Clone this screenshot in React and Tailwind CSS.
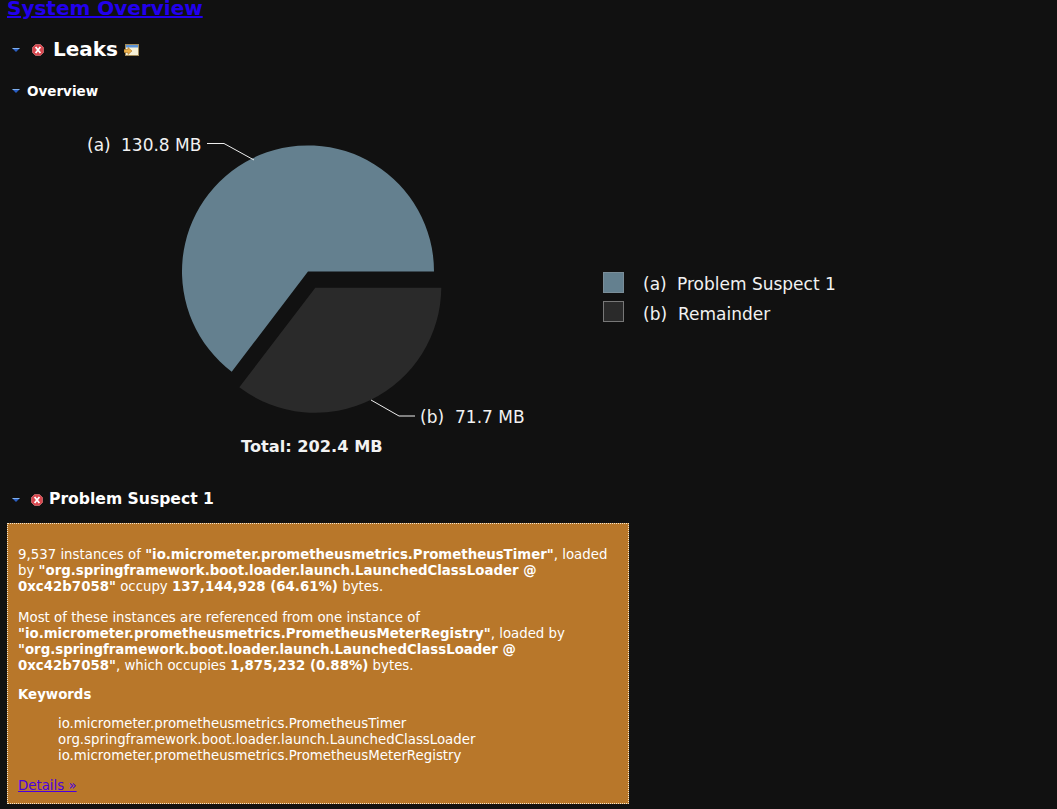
const font = { fontFamily: '"DejaVu Sans", Verdana, sans-serif' }

function Twisty() {
    return (
        <svg width="8" height="6" viewBox="0 0 8 6" className="shrink-0">
            <path d="M0.5 1.5H7.5L4 5Z" fill="#2a5fc4" />
            <path d="M0.5 1.5H7.5" stroke="#7fb0f0" strokeWidth="1" />
        </svg>
    )
}

function ErrorIcon() {
    return (
        <svg width="12" height="12" viewBox="0 0 12 12" className="shrink-0 block">
            <path d="M3.5 0.5H8.5L11.5 3.5V8.5L8.5 11.5H3.5L0.5 8.5V3.5Z" fill="#d9474f" stroke="#e58a8a" strokeWidth="0.6" />
            <path d="M3.6 3L8.4 9M8.4 3L3.6 9" stroke="#fff" strokeWidth="1.8" />
        </svg>
    )
}

function WindowIcon() {
    return (
        <svg width="15" height="13" viewBox="0 0 15 13" className="shrink-0 block">
            <rect x="1.5" y="0.5" width="13" height="11" fill="#f6f1d8" stroke="#a08a5a" />
            <rect x="2" y="1" width="12" height="2.5" fill="#5b93d8" />
            <path d="M0 5.5H4V3.5L8 7L4 10.5V8.5H0Z" fill="#eeb24a" stroke="#a8742a" strokeWidth="0.6" />
        </svg>
    )
}

function PieChart() {
    return (
        <svg width="1057" height="364" viewBox="0 101 1057 364" className="block" fontFamily='"DejaVu Sans", Verdana, sans-serif' fontSize="17" fill="#f2f2f2">
            <path d="M308 271.5L231.7 371.7A126 126 0 1 1 434 271.5Z" fill="#64808f" />
            <path d="M315.3 287.7H441.3A126 126 0 0 1 239.3 387.3Z" fill="#2a2a2a" />
            <path d="M207 143.5H224L254 160" fill="none" stroke="#eeeeee" strokeWidth="1" />
            <path d="M371 400L399 416H415" fill="none" stroke="#eeeeee" strokeWidth="1" />
            <text x="87" y="151">(a)</text>
            <text x="121" y="151">130.8 MB</text>
            <text x="420" y="423">(b)</text>
            <text x="455" y="423">71.7 MB</text>
            <text x="241" y="452" fontWeight="700" fontSize="16.2">Total: 202.4 MB</text>
            <rect x="603.5" y="272.5" width="20" height="20" fill="#64808f" stroke="#7a8d98" />
            <rect x="603.5" y="301.5" width="20" height="20" fill="#2a2a2a" stroke="#777777" />
            <text x="643" y="290">(a)</text>
            <text x="677" y="290">Problem Suspect 1</text>
            <text x="643" y="320">(b)</text>
            <text x="678" y="320">Remainder</text>
        </svg>
    )
}

export default function App() {
    return (
        <div className="w-[1057px] h-[809px] overflow-hidden bg-[#111111] text-white" style={font}>
            <a href="#" className="block pl-[7px] text-[20px] leading-[16px] font-bold text-[#2200ee] underline">System Overview</a>

            <div className="flex items-center h-[28px] mt-[20px] pl-[12px]">
                <Twisty />
                <span className="ml-[12px]"><ErrorIcon /></span>
                <h1 className="ml-[9px] pb-[2px] text-[20px] font-bold leading-[26px]">Leaks</h1>
                <span className="ml-[6px]"><WindowIcon /></span>
            </div>

            <div className="flex items-center h-[20px] mt-[17px] pl-[12px]">
                <Twisty />
                <h2 className="ml-[7px] text-[13.5px] font-bold">Overview</h2>
            </div>

            <PieChart />

            <div className="flex items-center h-[20px] mt-[25px] pl-[12px]">
                <Twisty />
                <span className="ml-[11px]"><ErrorIcon /></span>
                <h2 className="ml-[6px] text-[15.6px] font-bold">Problem Suspect 1</h2>
            </div>

            <div className="w-[622px] h-[281px] ml-[7px] mt-[13px] px-[10px] pt-[23px] bg-[#b8772a] border border-dotted border-[#f5e6cc] text-[13.33px] leading-[16px] text-white">
                <p>9,537 instances of <b>"io.micrometer.prometheusmetrics.PrometheusTimer"</b>, loaded by <b>"org.springframework.boot.loader.launch.LaunchedClassLoader @ 0xc42b7058"</b> occupy <b>137,144,928 (64.61%)</b> bytes.</p>
                <p className="mt-[15px]">Most of these instances are referenced from one instance of <b>"io.micrometer.prometheusmetrics.PrometheusMeterRegistry"</b>, loaded by <b>"org.springframework.boot.loader.launch.LaunchedClassLoader @ 0xc42b7058"</b>, which occupies <b>1,875,232 (0.88%)</b> bytes.</p>
                <p className="mt-[13px] font-bold">Keywords</p>
                <ul className="mt-[13px] pl-[40px]">
                    <li>io.micrometer.prometheusmetrics.PrometheusTimer</li>
                    <li>org.springframework.boot.loader.launch.LaunchedClassLoader</li>
                    <li>io.micrometer.prometheusmetrics.PrometheusMeterRegistry</li>
                </ul>
                <a href="#" className="block mt-[14px] text-[#4a00e0] underline">Details »</a>
            </div>
        </div>
    )
}
